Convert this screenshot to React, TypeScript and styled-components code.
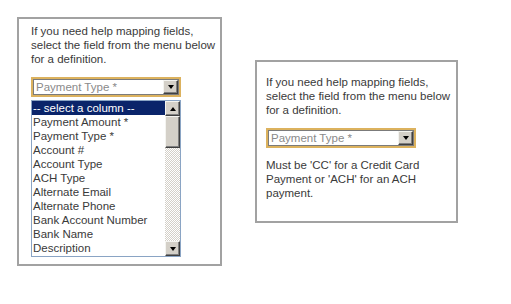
import React from "react";
import styled, { createGlobalStyle } from "styled-components";

const Global = createGlobalStyle`
  html, body { margin: 0; padding: 0; background: #fff; }
  body { font-family: "Liberation Sans", Arial, sans-serif; }
`;

const Page = styled.div`
  display: flex;
  align-items: flex-start;
  gap: 33px;
  padding: 17px;
`;

const Panel = styled.div<{ $top?: number; $pad: string; $width: number }>`
  box-sizing: border-box;
  width: ${(p) => p.$width}px;
  margin-top: ${(p) => p.$top ?? 0}px;
  border: 2px solid #a2a2a2;
  padding: ${(p) => p.$pad};
  display: flex;
  flex-direction: column;
`;

const Text = styled.p<{ $mt?: number }>`
  margin: ${(p) => p.$mt ?? 0}px 0 0;
  font-size: 11.5px;
  line-height: 14px;
  color: #3a3a3a;
  white-space: nowrap;
`;

const SelectBox = styled.div<{ $mt: number }>`
  box-sizing: border-box;
  width: 146px;
  height: 16px;
  margin: ${(p) => p.$mt}px 0 0 2px;
  border: 1px solid #7b7b7b;
  box-shadow: 0 0 0 2px #dcb25e;
  background: #fff;
  display: flex;
  align-items: center;
  justify-content: space-between;
`;

const SelectValue = styled.span`
  font-size: 11.5px;
  line-height: 14px;
  color: #8a8a8a;
  padding-left: 2px;
`;

const ArrowButton = styled.div<{ $h?: number }>`
  box-sizing: border-box;
  width: 15px;
  height: ${(p) => p.$h ?? 14}px;
  background: #d4d0c8;
  border-top: 1px solid #f4f4f0;
  border-left: 1px solid #f4f4f0;
  border-right: 1px solid #404040;
  border-bottom: 1px solid #404040;
  box-shadow: inset -1px -1px 0 #808080;
  display: flex;
  align-items: center;
  justify-content: center;
  flex: none;
`;

const Triangle = styled.div<{ $up?: boolean }>`
  width: 0;
  height: 0;
  border-left: 3.5px solid transparent;
  border-right: 3.5px solid transparent;
  ${(p) =>
    p.$up ? "border-bottom: 4px solid #000;" : "border-top: 4px solid #000;"}
`;

const ListBox = styled.div`
  box-sizing: border-box;
  width: 150px;
  height: 157px;
  margin-top: 5px;
  border: 1px solid #8aa4c4;
  display: flex;
  background: #fff;
`;

const Items = styled.div`
  flex: 1;
  overflow: hidden;
  display: flex;
  flex-direction: column;
`;

const Item = styled.div<{ $selected?: boolean }>`
  height: 14px;
  font-size: 11.5px;
  line-height: 14px;
  padding-left: 1px;
  white-space: nowrap;
  color: ${(p) => (p.$selected ? "#fff" : "#3a3a3a")};
  background: ${(p) => (p.$selected ? "#0a246a" : "transparent")};
`;

const Scrollbar = styled.div`
  width: 15px;
  display: flex;
  flex-direction: column;
  background: repeating-conic-gradient(#d4d0c8 0 25%, #ffffff 0 50%) 0 0 / 2px 2px;
`;

const Thumb = styled.div`
  box-sizing: border-box;
  height: 32px;
  background: #d4d0c8;
  border-top: 1px solid #f4f4f0;
  border-left: 1px solid #f4f4f0;
  border-right: 1px solid #404040;
  border-bottom: 1px solid #404040;
  box-shadow: inset -1px -1px 0 #808080;
`;

const Spacer = styled.div`
  flex: 1;
`;

const items = [
  "Payment Amount *",
  "Payment Type *",
  "Account #",
  "Account Type",
  "ACH Type",
  "Alternate Email",
  "Alternate Phone",
  "Bank Account Number",
  "Bank Name",
  "Description",
];

const Intro = ({ mt }: { mt?: number }) => (
  <Text $mt={mt}>
    If you need help mapping fields,
    <br />
    select the field from the menu below
    <br />
    for a definition.
  </Text>
);

export default function App() {
  return (
    <>
      <Global />
      <Page>
        <Panel $width={205} $pad="5px 10px 7px 12px">
          <Intro />
          <SelectBox $mt={13}>
            <SelectValue>Payment Type *</SelectValue>
            <ArrowButton>
              <Triangle />
            </ArrowButton>
          </SelectBox>
          <ListBox>
            <Items>
              <Item $selected>-- select a column --</Item>
              {items.map((t) => (
                <Item key={t}>{t}</Item>
              ))}
            </Items>
            <Scrollbar>
              <ArrowButton $h={15}>
                <Triangle $up />
              </ArrowButton>
              <Thumb />
              <Spacer />
              <ArrowButton $h={15}>
                <Triangle />
              </ArrowButton>
            </Scrollbar>
          </ListBox>
        </Panel>
        <Panel $width={203} $top={43} $pad="13px 8px 21px 9px">
          <Intro />
          <SelectBox $mt={13}>
            <SelectValue>Payment Type *</SelectValue>
            <ArrowButton>
              <Triangle />
            </ArrowButton>
          </SelectBox>
          <Text $mt={12}>
            Must be 'CC' for a Credit Card
            <br />
            Payment or 'ACH' for an ACH
            <br />
            payment.
          </Text>
        </Panel>
      </Page>
    </>
  );
}
